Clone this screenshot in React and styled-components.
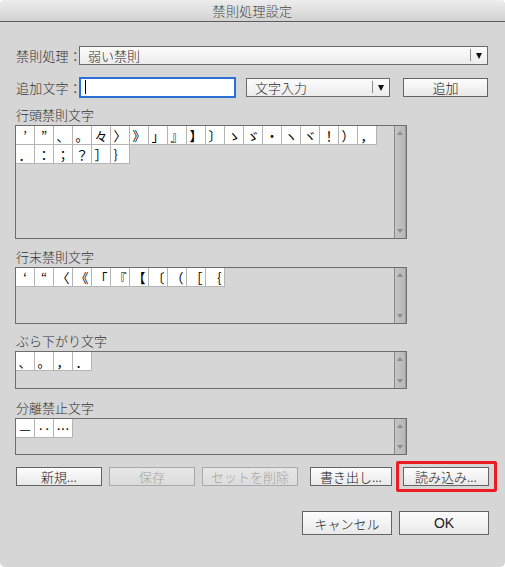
import React from "react";
import styled, { createGlobalStyle } from "styled-components";

const GlobalStyle = createGlobalStyle`
  html, body {
    margin: 0;
    padding: 0;
    background: #ffffff;
  }
  body {
    font-family: "Noto Sans CJK JP", "Liberation Sans", sans-serif;
    font-weight: 300;
  }
`;

const sections = [
  {
    title: "行頭禁則文字",
    height: 114,
    gap: 10,
    chars: ["’", "”", "、", "。", "々", "〉", "》", "」", "』", "】", "〕", "ゝ", "ゞ", "・", "ヽ", "ヾ", "！", "）", "，", "．", "：", "；", "？", "］", "｝"],
  },
  {
    title: "行末禁則文字",
    height: 57,
    gap: 10,
    chars: ["‘", "“", "〈", "《", "「", "『", "【", "〔", "（", "［", "｛"],
  },
  {
    title: "ぶら下がり文字",
    height: 38,
    gap: 9,
    chars: ["、", "。", "，", "．"],
  },
  {
    title: "分離禁止文字",
    height: 37,
    gap: 11,
    chars: ["—", "‥", "…"],
  },
];

function Select({ value, width }) {
  return (
    <SelectBox $width={width}>
      <SelectText>{value}</SelectText>
      <SelectDivider />
      <SelectArrow />
    </SelectBox>
  );
}

function CharBox({ chars, height }) {
  return (
    <ListBox $height={height}>
      <CellArea>
        {chars.map((c, i) => (
          <Cell key={i}>{c}</Cell>
        ))}
      </CellArea>
      <ScrollTrack>
        <ArrowUp />
        <ArrowDown />
      </ScrollTrack>
    </ListBox>
  );
}

function App() {
  return (
    <>
      <GlobalStyle />
      <Window>
        <TitleBar>禁則処理設定</TitleBar>
        <Content>
          <Row>
            <Label>禁則処理：</Label>
            <Select value="弱い禁則" width={409} />
          </Row>
          <Row $top={12}>
            <Label>追加文字：</Label>
            <TextInput>
              <Caret />
            </TextInput>
            <Spacer $w={10} />
            <Select value="文字入力" width={144} />
            <Spacer $w={13} />
            <Button $width={85}>追加</Button>
          </Row>

          {sections.map((s) => (
            <Section key={s.title} $top={s.gap}>
              <SectionLabel>{s.title}</SectionLabel>
              <CharBox chars={s.chars} height={s.height} />
            </Section>
          ))}

          <ButtonRow>
            <Button $width={86}>新規...</Button>
            <Button $width={86} $ml={7} disabled>保存</Button>
            <Button $width={96} $ml={7} disabled>セットを削除</Button>
            <Button $width={82} $ml={12}>書き出し...</Button>
            <Highlight>
              <Button $width={86}>読み込み...</Button>
            </Highlight>
          </ButtonRow>

          <FooterRow>
            <Button $width={90} $height={24}>キャンセル</Button>
            <Button $width={90} $height={24} $ml={7} $latin>OK</Button>
          </FooterRow>
        </Content>
      </Window>
    </>
  );
}

export default App;

const Window = styled.div`
  width: 505px;
  height: 567px;
  background: #d6d6d6;
  border-radius: 5px;
  overflow: hidden;
  display: flex;
  flex-direction: column;
  color: #2a2a2a;
`;

const TitleBar = styled.div`
  height: 21px;
  border-bottom: 1px solid #5c5c5c;
  background: linear-gradient(#ededed, #d2d2d2);
  display: flex;
  align-items: center;
  justify-content: center;
  font-size: 13px;
  color: #454545;
  letter-spacing: 0.3px;
`;

const Content = styled.div`
  padding: 23px 17px 0 16px;
  display: flex;
  flex-direction: column;
`;

const Row = styled.div`
  display: flex;
  align-items: center;
  height: 20px;
  margin-top: ${(p) => p.$top || 0}px;
`;

const Label = styled.div`
  width: 63px;
  font-size: 13px;
  color: #333;
  white-space: nowrap;
  letter-spacing: 0.2px;
`;

const Spacer = styled.div`
  width: ${(p) => p.$w}px;
  flex-shrink: 0;
`;

const SelectBox = styled.div`
  box-sizing: border-box;
  width: ${(p) => p.$width}px;
  height: 19px;
  border: 1px solid #6a6a6a;
  background: linear-gradient(#fcfcfc, #ececec);
  display: flex;
  align-items: center;
`;

const SelectText = styled.div`
  flex: 1;
  padding-left: 8px;
  font-size: 13px;
  color: #2a2a2a;
`;

const SelectDivider = styled.div`
  width: 1px;
  height: 12px;
  background: #8c8c8c;
`;

const SelectArrow = styled.div`
  width: 0;
  height: 0;
  margin: 1px 5px 0 5px;
  border-left: 3.5px solid transparent;
  border-right: 3.5px solid transparent;
  border-top: 6px solid #111;
`;

const TextInput = styled.div`
  box-sizing: border-box;
  width: 157px;
  height: 21px;
  border: 2px solid #2c6fd6;
  background: #fff;
  display: flex;
  align-items: center;
  padding-left: 4px;
`;

const Caret = styled.div`
  width: 1px;
  height: 14px;
  background: #000;
`;

const Button = styled.button`
  box-sizing: border-box;
  width: ${(p) => p.$width}px;
  height: ${(p) => p.$height || 19}px;
  padding: 0;
  margin: 0 0 0 ${(p) => p.$ml || 0}px;
  border: 1px solid ${(p) => (p.disabled ? "#a9a9a9" : "#646464")};
  border-radius: 0;
  background: ${(p) =>
    p.disabled ? "linear-gradient(#e6e6e6, #dcdcdc)" : "linear-gradient(#fdfdfd, #e9e9e9)"};
  color: ${(p) => (p.disabled ? "#a3a3a3" : "#222")};
  font-family: ${(p) =>
    p.$latin ? '"Liberation Sans", sans-serif' : '"Noto Sans CJK JP", sans-serif'};
  font-weight: ${(p) => (p.$latin ? 400 : 300)};
  font-size: ${(p) => (p.$latin ? 14 : 13)}px;
  display: flex;
  align-items: center;
  justify-content: center;
  flex-shrink: 0;
`;

const Section = styled.div`
  display: flex;
  flex-direction: column;
  margin-top: ${(p) => p.$top}px;
`;

const SectionLabel = styled.div`
  font-size: 13px;
  line-height: 16px;
  height: 16px;
  margin-bottom: 2px;
  color: #333;
`;

const ListBox = styled.div`
  box-sizing: border-box;
  width: 392px;
  height: ${(p) => p.$height}px;
  margin-left: -1px;
  border: 1px solid #6e6e6e;
  display: flex;
`;

const CellArea = styled.div`
  flex: 1;
  display: flex;
  flex-wrap: wrap;
  align-content: flex-start;
`;

const Cell = styled.div`
  box-sizing: border-box;
  width: 19px;
  height: 19px;
  background: #fff;
  border-right: 1px solid #b4b4b4;
  border-bottom: 1px solid #b4b4b4;
  display: flex;
  align-items: center;
  justify-content: center;
  font-size: 13px;
  font-weight: 400;
  line-height: 1;
  color: #000;
`;

const ScrollTrack = styled.div`
  position: relative;
  width: 11px;
  border-left: 1px solid #8a8a8a;
  background: linear-gradient(90deg, #c4c4c4, #b6b6b6);
  box-shadow: inset -1px 0 0 #9e9e9e;
`;

const ArrowUp = styled.div`
  position: absolute;
  top: 5px;
  left: 2px;
  width: 0;
  height: 0;
  border-left: 3.5px solid transparent;
  border-right: 3.5px solid transparent;
  border-bottom: 4px solid #8c8c8c;
`;

const ArrowDown = styled.div`
  position: absolute;
  bottom: 5px;
  left: 2px;
  width: 0;
  height: 0;
  border-left: 3.5px solid transparent;
  border-right: 3.5px solid transparent;
  border-top: 4px solid #8c8c8c;
`;

const ButtonRow = styled.div`
  display: flex;
  align-items: center;
  margin-top: 12px;
`;

const Highlight = styled.div`
  position: relative;
  margin-left: 11px;
  display: flex;
  &::after {
    content: "";
    position: absolute;
    left: -7px;
    right: -8px;
    top: -6px;
    bottom: -6px;
    border: 3px solid #ec1c24;
    border-radius: 2px;
    pointer-events: none;
  }
`;

const FooterRow = styled.div`
  display: flex;
  justify-content: flex-end;
  margin-top: 25px;
  margin-right: -1px;
`;
